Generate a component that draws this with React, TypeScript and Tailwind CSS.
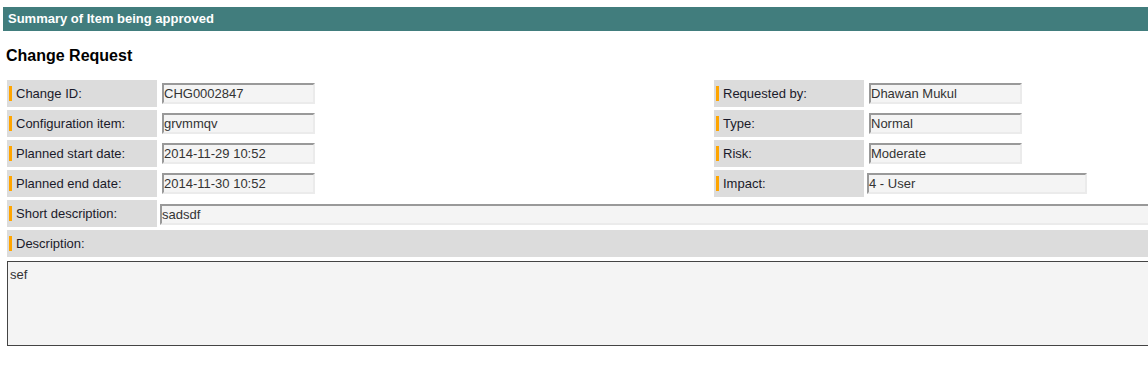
import React from "react";

const Label = ({ text, wide }: { text: string; wide?: boolean }) => (
  <div
    className={`${wide ? "flex-1" : "w-[150px] shrink-0"} h-[27px] bg-[#dcdcdc] flex items-center pl-[2px]`}
  >
    <span className="w-[3px] h-[15px] bg-[#ffa500] mr-[4px]" />
    <span className="text-[13px] text-[#1a1a2a]">{text}</span>
  </div>
);

const Field = ({ value, w, ml = 5 }: { value: string; w: string; ml?: number }) => (
  <div className={`h-[27px] flex items-center ${ml === 5 ? "pl-[5px]" : ml === 3 ? "pl-[3px]" : "pl-[3px]"}`}>
    <div
      className={`${w} h-[21px] bg-[#f4f4f4] border-2 border-t-[#999999] border-l-[#999999] border-r-[#ebebeb] border-b-[#ebebeb] flex items-center text-[13px] text-[#333333] leading-none`}
    >
      {value}
    </div>
  </div>
);

export default function App() {
  const rows: [string, string, string, string, string][] = [
    ["Change ID:", "CHG0002847", "Requested by:", "Dhawan Mukul", "w-[153px]"],
    ["Configuration item:", "grvmmqv", "Type:", "Normal", "w-[153px]"],
    ["Planned start date:", "2014-11-29 10:52", "Risk:", "Moderate", "w-[153px]"],
    ["Planned end date:", "2014-11-30 10:52", "Impact:", "4 - User", "w-[220px]"],
  ];
  return (
    <div className="w-[1148px] h-[383px] overflow-hidden bg-white font-['Liberation_Sans',Arial,sans-serif]">
      <div className="h-[7px]" />
      <div className="ml-[3px] h-[24px] bg-[#417d7d] flex items-center pl-[5px] text-[13px] font-bold text-white">
        Summary of Item being approved
      </div>
      <div className="pl-[6px] pt-[13px] h-[49px] text-[16px] font-bold text-black">Change Request</div>
      <div className="pl-[7px] flex flex-col gap-[3px] w-[1300px]">
        {rows.map(([l, v, rl, rv, rw], i) => (
          <div key={i} className="flex">
            <div className="w-[707px] shrink-0 flex">
              <Label text={l} />
              <Field value={v} w="w-[153px]" />
            </div>
            <Label text={rl} />
            <Field value={rv} w={rw} ml={i === 3 ? 3 : 5} />
          </div>
        ))}
        <div className="flex">
          <Label text="Short description:" />
          <div className="h-[27px] pl-[3px] pt-[4px]">
            <div className="w-[1100px] h-[21px] bg-[#f4f4f4] border-2 border-t-[#999999] border-l-[#999999] border-r-[#ebebeb] border-b-[#ebebeb] flex items-center text-[13px] text-[#333333] leading-none">
              sadsdf
            </div>
          </div>
        </div>
        <div className="flex w-[1200px]">
          <Label text="Description:" wide />
        </div>
        <div className="mt-[1px] w-[1200px] h-[85px] bg-[#f4f4f4] border border-[#444444] pl-[2px] pt-[3px] text-[13px] text-[#333333]">
          sef
        </div>
      </div>
    </div>
  );
}
